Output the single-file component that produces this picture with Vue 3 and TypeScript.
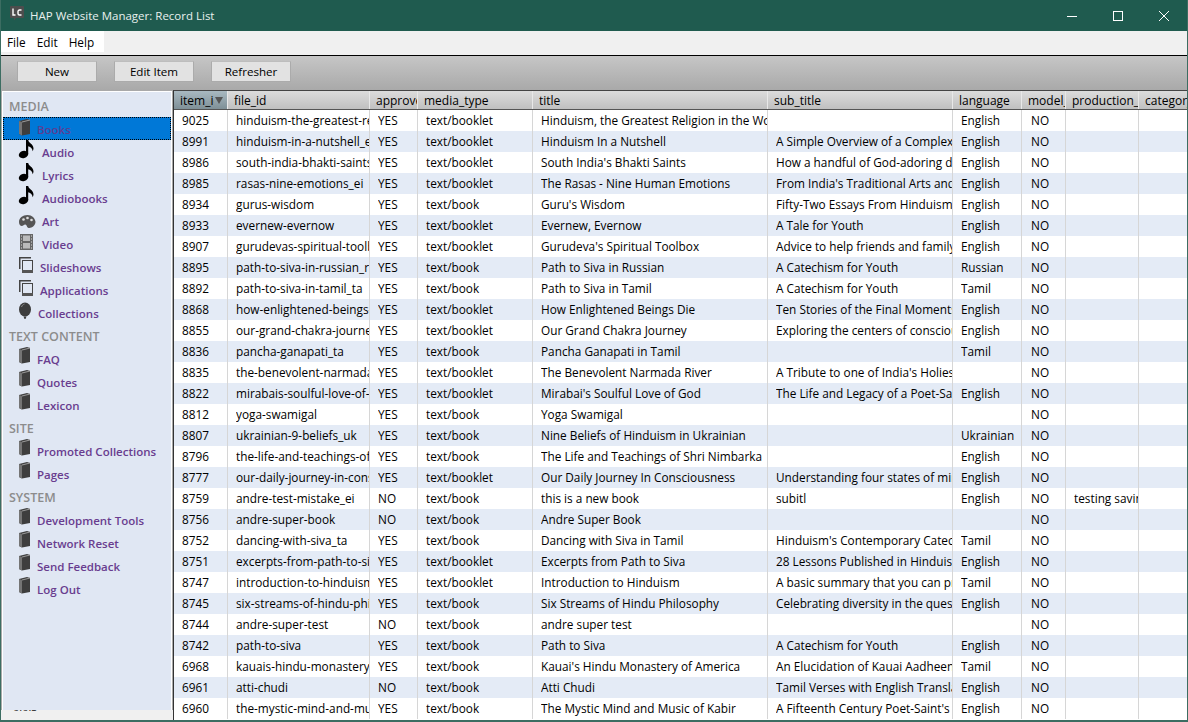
<script setup lang="ts">
type Row = [string, string, string, string, string, string, string, string?];
const cols = [
  { k: 'item_id', w: 54 }, { k: 'file_id', w: 142 }, { k: 'approved', w: 48 }, { k: 'media_type', w: 115 },
  { k: 'title', w: 235 }, { k: 'sub_title', w: 185 }, { k: 'language', w: 69 }, { k: 'model_release', w: 44 },
  { k: 'production_notes', w: 73 }, { k: 'category', w: 60 },
];
const rows: Row[] = [
  ['9025','hinduism-the-greatest-religion','YES','text/booklet','Hinduism, the Greatest Religion in the World','','English'],
  ['8991','hinduism-in-a-nutshell_ei','YES','text/booklet','Hinduism In a Nutshell','A Simple Overview of a Complex Faith','English'],
  ['8986','south-india-bhakti-saints','YES','text/booklet',"South India's Bhakti Saints",'How a handful of God-adoring devotees','English'],
  ['8985','rasas-nine-emotions_ei','YES','text/booklet','The Rasas - Nine Human Emotions',"From India's Traditional Arts and Dance",'English'],
  ['8934','gurus-wisdom','YES','text/book',"Guru's Wisdom",'Fifty-Two Essays From Hinduism Today','English'],
  ['8933','evernew-evernow','YES','text/booklet','Evernew, Evernow','A Tale for Youth','English'],
  ['8907','gurudevas-spiritual-toolbox','YES','text/booklet',"Gurudeva's Spiritual Toolbox",'Advice to help friends and family members','English'],
  ['8895','path-to-siva-in-russian_ru','YES','text/book','Path to Siva in Russian','A Catechism for Youth','Russian'],
  ['8892','path-to-siva-in-tamil_ta','YES','text/book','Path to Siva in Tamil','A Catechism for Youth','Tamil'],
  ['8868','how-enlightened-beings-die','YES','text/booklet','How Enlightened Beings Die','Ten Stories of the Final Moments of Saints','English'],
  ['8855','our-grand-chakra-journey','YES','text/booklet','Our Grand Chakra Journey','Exploring the centers of consciousness','English'],
  ['8836','pancha-ganapati_ta','YES','text/book','Pancha Ganapati in Tamil','','Tamil'],
  ['8835','the-benevolent-narmada-river','YES','text/booklet','The Benevolent Narmada River',"A Tribute to one of India's Holiest Rivers",''],
  ['8822','mirabais-soulful-love-of-god','YES','text/booklet',"Mirabai's Soulful Love of God",'The Life and Legacy of a Poet-Saint','English'],
  ['8812','yoga-swamigal','YES','text/book','Yoga Swamigal','',''],
  ['8807','ukrainian-9-beliefs_uk','YES','text/book','Nine Beliefs of Hinduism in Ukrainian','','Ukrainian'],
  ['8796','the-life-and-teachings-of-shri','YES','text/book','The Life and Teachings of Shri Nimbarka','','English'],
  ['8777','our-daily-journey-in-consciousness','YES','text/booklet','Our Daily Journey In Consciousness','Understanding four states of mind','English'],
  ['8759','andre-test-mistake_ei','NO','text/book','this is a new book','subitl','English','testing saving'],
  ['8756','andre-super-book','NO','text/book','Andre Super Book','',''],
  ['8752','dancing-with-siva_ta','YES','text/book','Dancing with Siva in Tamil',"Hinduism's Contemporary Catechism",'Tamil'],
  ['8751','excerpts-from-path-to-siva','YES','text/booklet','Excerpts from Path to Siva','28 Lessons Published in Hinduism Today','English'],
  ['8747','introduction-to-hinduism','YES','text/booklet','Introduction to Hinduism','A basic summary that you can print','Tamil'],
  ['8745','six-streams-of-hindu-philosophy','YES','text/book','Six Streams of Hindu Philosophy','Celebrating diversity in the quest','English'],
  ['8744','andre-super-test','NO','text/book','andre super test','',''],
  ['8742','path-to-siva','YES','text/book','Path to Siva','A Catechism for Youth','English'],
  ['6968','kauais-hindu-monastery','YES','text/book',"Kauai's Hindu Monastery of America",'An Elucidation of Kauai Aadheenam','Tamil'],
  ['6961','atti-chudi','NO','text/book','Atti Chudi','Tamil Verses with English Translation','English'],
  ['6960','the-mystic-mind-and-music','YES','text/book','The Mystic Mind and Music of Kabir',"A Fifteenth Century Poet-Saint's Verses",'English'],
];
type NavItem = { label: string; icon: string; ml: number };
const nav: { head: string; items: NavItem[] }[] = [
  { head: 'MEDIA', items: [
    { label: 'Books', icon: 'book', ml: 37 }, { label: 'Audio', icon: 'note', ml: 42 }, { label: 'Lyrics', icon: 'note', ml: 42 },
    { label: 'Audiobooks', icon: 'note', ml: 42 }, { label: 'Art', icon: 'palette', ml: 42 }, { label: 'Video', icon: 'film', ml: 42 },
    { label: 'Slideshows', icon: 'stack', ml: 40 }, { label: 'Applications', icon: 'stack', ml: 40 }, { label: 'Collections', icon: 'balloon', ml: 38 },
  ]},
  { head: 'TEXT CONTENT', items: [
    { label: 'FAQ', icon: 'book', ml: 37 }, { label: 'Quotes', icon: 'book', ml: 37 }, { label: 'Lexicon', icon: 'book', ml: 37 },
  ]},
  { head: 'SITE', items: [
    { label: 'Promoted Collections', icon: 'book', ml: 37 }, { label: 'Pages', icon: 'book', ml: 37 },
  ]},
  { head: 'SYSTEM', items: [
    { label: 'Development Tools', icon: 'book', ml: 37 }, { label: 'Network Reset', icon: 'book', ml: 37 },
    { label: 'Send Feedback', icon: 'book', ml: 37 }, { label: 'Log Out', icon: 'book', ml: 37 },
  ]},
];
</script>

<template>
  <div class="win">
    <header class="titlebar">
      <svg class="logo" width="16" height="17" viewBox="0 0 16 17">
        <path d="M1 0h12a1 1 0 0 1 1 1v10a1 1 0 0 1-1 1H6l-2 2.500V12H1a1 1 0 0 1-1-1V1a1 1 0 0 1 1-1z" fill="#4d4d4d" />
        <path d="M3 2.500v6.500h2.500M11.500 4H9.500A1.500 1.500 0 0 0 8 5.500v2A1.500 1.500 0 0 0 9.500 9h2" fill="none" stroke="#fff" stroke-width="1.400" />
      </svg>
      <span class="wintitle">HAP Website Manager: Record List</span>
      <div class="winctl">
        <svg width="12" height="12" viewBox="0 0 12 12"><path d="M1 6.500h10" stroke="#fff" /></svg>
        <svg width="12" height="12" viewBox="0 0 12 12"><rect x="1.500" y="1.500" width="9" height="9" fill="none" stroke="#fff" /></svg>
        <svg width="12" height="12" viewBox="0 0 12 12"><path d="M1 1l10 10M11 1L1 11" stroke="#fff" /></svg>
      </div>
    </header>
    <nav class="menubar">
      <div class="menus"><span>File</span><span>Edit</span><span>Help</span></div>
    </nav>
    <div class="toolbar">
      <button class="btn b1">New</button>
      <button class="btn b2">Edit Item</button>
      <button class="btn b3">Refresher</button>
    </div>
    <div class="main">
      <aside class="side">
        <template v-for="(g, gi) in nav" :key="g.head">
          <div class="head" :class="'h' + gi">{{ g.head }}</div>
          <div v-for="it in g.items" :key="it.label" class="item" :class="{ sel: it.label === 'Books' }">
            <svg class="ic" width="18" height="23" viewBox="0 0 18 23">
              <g v-if="it.icon === 'book'">
                <path d="M1 2L9 0l3 1v14l-8 1.500L1 15z" fill="#3e3e3e" />
                <path d="M1 2l3 1v13.500L1 15z" fill="#757575" />
                <path d="M4 3l8-2" stroke="#9a9a9a" fill="none" />
              </g>
              <g v-else-if="it.icon === 'note'">
                <ellipse cx="5.500" cy="14.500" rx="4.800" ry="3.600" fill="#000" transform="rotate(-15 5.500 14.500)" />
                <path d="M8 0h2.200v14H8z" fill="#000" />
                <path d="M10 0c.5 3 5.500 4 5.500 8.500 0 1-.4 2-1 2.700.2-3-2.500-4.500-4.500-5z" fill="#000" />
              </g>
              <g v-else-if="it.icon === 'palette'" transform="translate(0.500 4.500)">
                <path d="M9 1.500C4 1.500 .500 4.700.500 8.500c0 3 2 4.500 3.500 3.800 1.400-.6 2-1.800 3.300-1 1.500.8.700 2.300 2.200 3 3 1 7.500-2 7.500-6C16.500 4.500 13.500 1.500 9 1.500z" fill="#555" />
                <circle cx="5" cy="6" r="1.300" fill="#ddd" /><circle cx="9" cy="4.500" r="1.300" fill="#ddd" /><circle cx="13" cy="6.500" r="1.300" fill="#ddd" />
              </g>
              <g v-else-if="it.icon === 'film'" transform="translate(1 2)">
                <rect x="1" y="0" width="13" height="16" fill="#666" />
                <rect x="4" y="1.500" width="7" height="5.500" fill="#bbb" /><rect x="4" y="9" width="7" height="5.500" fill="#bbb" />
                <path d="M2 2h1M2 5h1M2 8h1M2 11h1M2 14h1M12 2h1M12 5h1M12 8h1M12 11h1M12 14h1" stroke="#ddd" />
              </g>
              <g v-else-if="it.icon === 'stack'" transform="translate(0 2)">
                <path d="M1 0h12v1.500H2.500V12H1z" fill="#444" />
                <rect x="4.500" y="3.500" width="10" height="11" fill="#e0e7f3" stroke="#444" />
                <rect x="4" y="13" width="11" height="3" fill="#555" />
              </g>
              <g v-else transform="translate(0 2)">
                <ellipse cx="7" cy="6.500" rx="6" ry="7" fill="#3d3d3d" />
                <path d="M5.500 13.500h3l-1 2.500h-1z" fill="#3d3d3d" />
                <path d="M3.500 4c.5-1.500 1.500-2.500 3-3" stroke="#888" fill="none" />
              </g>
            </svg>
            <span class="lbl" :style="{ marginLeft: it.ml - 36 + 'px' }">{{ it.label }}</span>
          </div>
        </template>
      </aside>
      <section class="tbl">
        <div class="thead">
          <div v-for="(c, i) in cols" :key="c.k" class="th" :class="{ sorted: i === 0 }" :style="{ width: c.w + 'px' }">
            <span class="thtext">{{ c.k }}</span>
            <i v-if="i === 0" class="sort"></i>
          </div>
        </div>
        <div class="tbody">
          <div v-for="r in rows" :key="r[0]" class="tr">
            <div v-for="(c, i) in cols" :key="c.k" class="td" :class="'c' + i" :style="{ width: c.w + 'px' }">
              <span>{{ i < 7 ? r[i] : i === 7 ? 'NO' : i === 8 ? (r[7] || '') : '' }}</span>
            </div>
          </div>
        </div>
      </section>
    </div>
    <div class="foot"><span>0.0.3</span></div>
  </div>
</template>

<style>
html, body { margin: 0; height: 100%; overflow: hidden; }
</style>
<style scoped>
.win {
  width: 1188px; height: 722px; box-sizing: border-box; overflow: hidden; position: relative;
  display: flex; flex-direction: column; background: #f0f0f0;
  font-family: "Open Sans", "Noto Sans", sans-serif; font-size: 11.800px; color: #000;
  border: 1px solid #3c6d62; border-top: 0; border-bottom-width: 2px;
}
.titlebar { height: 31px; background: #1f5b4f; color: #fff; display: flex; align-items: center; flex: none; margin: 0 -1px; }
.logo { margin: 0 0 2px 10px; }
.wintitle { margin-left: 4px; font-size: 11.500px; color: #e8f0ee; }
.winctl { margin-left: auto; display: flex; gap: 34px; padding-right: 18px; }
.menubar { height: 25px; flex: none; background: #f0f0f0; border-bottom: 1px solid #000; box-sizing: border-box; }
.menus { width: 103px; height: 21px; background: #fff; display: flex; padding-left: 6px; box-sizing: border-box; gap: 11px; align-items: center; font-size: 11.800px; }
.toolbar { height: 34px; flex: none; display: flex; align-items: center; background: linear-gradient(#c6c6c6, #a9a9a9); }
.btn {
  height: 21px; padding: 0; box-sizing: border-box; background: #e2e2e2; border: 1px solid #ababab; border-top-color: #bdbdbd;
  font: inherit; font-size: 11.600px; color: #000; margin-top: -4px;
}
.b1 { width: 80px; margin-left: 16px; }
.b2 { width: 80px; margin-left: 17px; }
.b3 { width: 80px; margin-left: 17px; }
.main { flex: 1; display: flex; min-height: 0; background: #a9a9a9; }
.side {
  width: 170px; flex: none; box-sizing: border-box; background: #e0e7f3; border: 1px solid #fff;
  margin: 1px 1px 0 1px; height: 620px;
}
.head { font-size: 12.500px; font-weight: 600; color: #8c8c8c; height: 23px; line-height: 25px; padding-left: 6px; }
.head.h0 { margin-top: 2px; }
.item { height: 23px; display: flex; align-items: flex-start; padding-left: 15px; box-sizing: border-box; color: #693d8f; font-size: 11.500px; font-weight: 600; line-height: 25px; }
.item.sel { background: #0078d7; outline: 1px dotted #000; outline-offset: -1px; color: #5b3f93; }
.ic { flex: none; overflow: visible; }
.sel .ic { margin-top: 2px; }
.lbl { white-space: nowrap; }
.tbl { flex: 1; min-width: 0; border-left: 1px solid #333; border-top: 1px solid #444; overflow: hidden; background: #fff; }
.thead { display: flex; height: 18px; border-bottom: 1px solid #555; background: linear-gradient(#dcdcdc, #c0c0c0); }
.th { flex: none; box-sizing: border-box; height: 18px; padding-left: 6px; border-right: 1px solid #e8e8e8; overflow: hidden; white-space: nowrap; line-height: 19px; position: relative; font-size: 12px; }
.th.sorted { background: linear-gradient(#a9b9c1, #7f9097); }
.thtext { display: block; overflow: hidden; }
.sorted .thtext { width: 34px; }
.sort { position: absolute; right: 4px; top: 6px; width: 0; height: 0; border-left: 4px solid transparent; border-right: 4px solid transparent; border-top: 7px solid #555; }
.tr { display: flex; height: 21px; background: #fff; }
.tr:nth-child(even) { background: #e4ebf6; }
.td { flex: none; box-sizing: border-box; height: 21px; padding-left: 8px; border-right: 1px solid #d6d6d6; overflow: hidden; white-space: nowrap; line-height: 20px; }
.td.c7 { padding-left: 9px; }
.td span { display: block; overflow: hidden; }
.foot { position: absolute; left: 0; bottom: 0; height: 10px; width: 172px; overflow: hidden; background: #f0f0f0; }
.foot span { font-size: 11px; position: absolute; top: -11px; left: 12px; color: #333; }
</style>
